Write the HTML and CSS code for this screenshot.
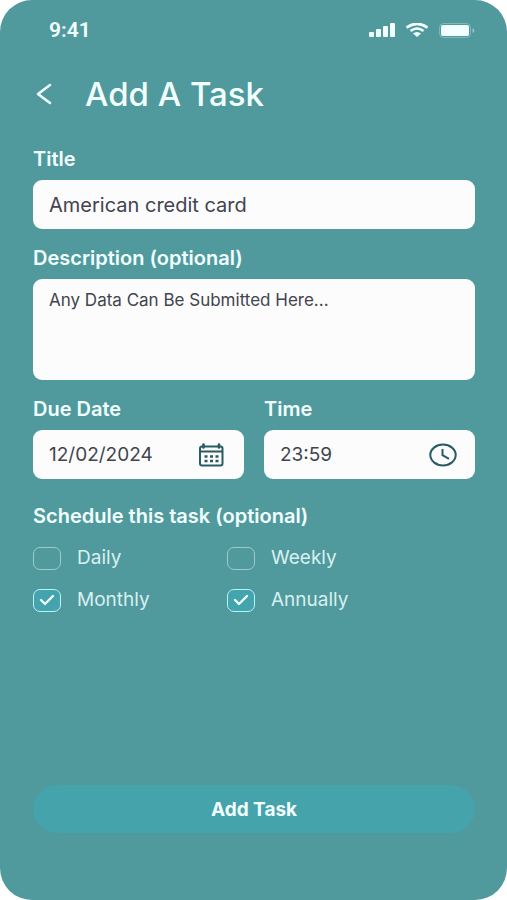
FILE: index.html
```html
<!DOCTYPE html>
<html lang="en">
<head>
<meta charset="utf-8">
<meta name="viewport" content="width=device-width, initial-scale=1">
<title>Add A Task</title>
<link rel="stylesheet" href="styles.css">
</head>
<body>
<div class="screen">
  <div class="status">
    <span class="clock">9:41</span>
    <div class="indicators">
      <svg width="26" height="14" viewBox="0 0 26 14" fill="currentColor" aria-hidden="true">
        <rect x="0" y="9" width="5" height="5" rx="1"/><rect x="7" y="6" width="5" height="8" rx="1"/><rect x="14" y="3" width="5" height="11" rx="1"/><rect x="21" y="0" width="5" height="14" rx="1"/>
      </svg>
      <svg width="24" height="14" viewBox="0 0 24 14" aria-hidden="true">
        <path d="M1.500 4.600Q12-3 22.500 4.600M5.500 8Q12 3 18.500 8" fill="none" stroke="currentColor" stroke-width="2.600"/>
        <path d="M8 10.600Q12 7.600 16 10.600L12 14Z" fill="currentColor"/>
      </svg>
      <svg width="36" height="15" viewBox="0 0 36 15" aria-hidden="true">
        <rect x=".5" y=".5" width="31" height="14" rx="4" fill="none" stroke="currentColor" stroke-opacity=".3"/>
        <rect x="2" y="2" width="28" height="11" rx="2" fill="currentColor"/>
        <path d="M33.500 5v5q2-1 2-2.500t-2-2.500Z" fill="currentColor" fill-opacity=".4"/>
      </svg>
    </div>
  </div>
  <header class="header">
    <button class="back" type="button" aria-label="Back">
      <svg width="16" height="22" viewBox="0 0 16 22" fill="none" stroke="currentColor" stroke-width="2.600" stroke-linecap="round" stroke-linejoin="round" aria-hidden="true"><path d="M14 2 2 11l12 9"/></svg>
    </button>
    <h1 class="heading">Add A Task</h1>
  </header>
  <form class="form">
    <div class="field">
      <label for="title">Title</label>
      <div class="box"><input class="long" id="title" type="text" value="American credit card"></div>
    </div>
    <div class="field">
      <label for="description">Description (optional)</label>
      <textarea id="description">Any Data Can Be Submitted Here...</textarea>
    </div>
    <div class="pair">
      <div class="field">
        <label for="date">Due Date</label>
        <div class="box">
          <input id="date" type="text" value="12/02/2024">
          <svg class="dark" width="28" height="24" viewBox="0 0 28 24" aria-hidden="true">
            <rect x="2" y="3.500" width="22.500" height="19" rx="2" fill="none" stroke="currentColor" stroke-width="2"/>
            <path d="M5.500 1.500v3M21 1.500v3" stroke="currentColor" stroke-width="2.600" stroke-linecap="round"/>
            <path d="M2 8.500h22.500" stroke="currentColor" stroke-width="2"/>
            <path d="M6.500 13.500h3m2.500 0h3m2.500 0h3M6.500 18h3m2.500 0h3m2.500 0h3" stroke="currentColor" stroke-width="2.400"/>
          </svg>
        </div>
      </div>
      <div class="field">
        <label for="time">Time</label>
        <div class="box">
          <input id="time" type="text" value="23:59">
          <svg class="dark" width="28" height="24" viewBox="0 0 28 24" fill="none" stroke="currentColor" stroke-width="2" aria-hidden="true">
            <ellipse cx="14" cy="12" rx="12.700" ry="10.400"/><path d="M13.500 6v6.200l6.500 3.600"/>
          </svg>
        </div>
      </div>
    </div>
    <fieldset class="schedule">
      <legend>Schedule this task (optional)</legend>
      <div class="options">
        <label class="option"><input type="checkbox">Daily</label>
        <label class="option"><input type="checkbox">Weekly</label>
        <label class="option"><span class="tick"><input type="checkbox" checked><svg width="16" height="12" viewBox="0 0 16 12" fill="none" stroke="currentColor" stroke-width="2.400" stroke-linecap="round" stroke-linejoin="round" aria-hidden="true"><path d="m2 6 4 4 8-8"/></svg></span>Monthly</label>
        <label class="option"><span class="tick"><input type="checkbox" checked><svg width="16" height="12" viewBox="0 0 16 12" fill="none" stroke="currentColor" stroke-width="2.400" stroke-linecap="round" stroke-linejoin="round" aria-hidden="true"><path d="m2 6 4 4 8-8"/></svg></span>Annually</label>
      </div>
    </fieldset>
    <button class="submit" type="button">Add Task</button>
  </form>
</div>
</body>
</html>
```
FILE: styles.css
```css
* { box-sizing: border-box; }

body {
  margin: 0;
  background: #fff;
  font-family: Inter, "Open Sans", sans-serif;
}

input, textarea, button { font: inherit; color: inherit; }

svg { display: block; flex: none; }

.screen {
  display: flex;
  flex-direction: column;
  min-height: 100vh;
  padding: 16px 32px 67px 33px;
  border-radius: 32px;
  background: #509a9d;
  color: #f2ffff;
}

.status {
  display: flex;
  align-items: center;
  justify-content: space-between;
  height: 28px;
  padding: 0 0 0 16px;
}

.clock {
  font-family: Roboto, sans-serif;
  font-size: 21px;
  font-weight: 600;
}

.indicators { display: flex; align-items: center; gap: 10px; }

.header {
  display: flex;
  align-items: center;
  gap: 31px;
  margin: 30px 0 33px;
}

.back {
  padding: 0 2px 0 3px;
  border: 0;
  background: none;
}

.heading {
  margin: 0;
  font-size: 33px;
  font-weight: 500;
  line-height: 40px;
}

.form {
  display: flex;
  flex: 1;
  flex-direction: column;
  gap: 17px;
}

.field {
  display: flex;
  flex-direction: column;
  gap: 9px;
  min-width: 0;
}

.field > label, legend {
  padding: 0;
  font-size: 20px;
  font-weight: 600;
  line-height: 24px;
}

.box {
  display: flex;
  align-items: center;
  height: 49px;
  padding: 0 18px 0 16px;
  border-radius: 9px;
  background: #fcfcfc;
  color: #41444f;
}

.box input {
  flex: 1;
  width: 100%;
  min-width: 0;
  padding: 0;
  border: 0;
  outline: 0;
  background: none;
  font-size: 19px;
}

.box .long { font-size: 20px; }

.dark { color: #285b63; }

textarea {
  display: block;
  width: 100%;
  height: 101px;
  padding: 10px 16px;
  border: 0;
  border-radius: 9px;
  resize: none;
  background: #fcfcfc;
  color: #41444f;
  font-size: 17px;
  line-height: 22px;
}

.pair {
  display: grid;
  grid-template-columns: 1fr 1fr;
  gap: 20px;
}

.schedule {
  min-width: 0;
  margin: 8px 0 0;
  padding: 0;
  border: 0;
}

.options {
  display: grid;
  grid-template-columns: 194px 1fr;
  row-gap: 18px;
  margin-top: 18px;
}

.option {
  display: flex;
  align-items: center;
  gap: 16px;
  font-size: 19px;
  line-height: 24px;
  color: #d8f0f1;
}

.option input {
  appearance: none;
  display: block;
  width: 28px;
  height: 23px;
  margin: 0;
  border: 1px solid #9ccbcc;
  border-radius: 7px;
}

.option input:checked {
  border-color: #b9f2f5;
  background: #43a4ae;
}

.tick { display: grid; place-items: center; color: #f2ffff; }
.tick > * { grid-area: 1 / 1; }
.tick svg { z-index: 1; pointer-events: none; }

.submit {
  height: 48px;
  margin-top: auto;
  border: 0;
  border-radius: 24px;
  background: #45a3ac;
  font-size: 19px;
  font-weight: 700;
}
```
